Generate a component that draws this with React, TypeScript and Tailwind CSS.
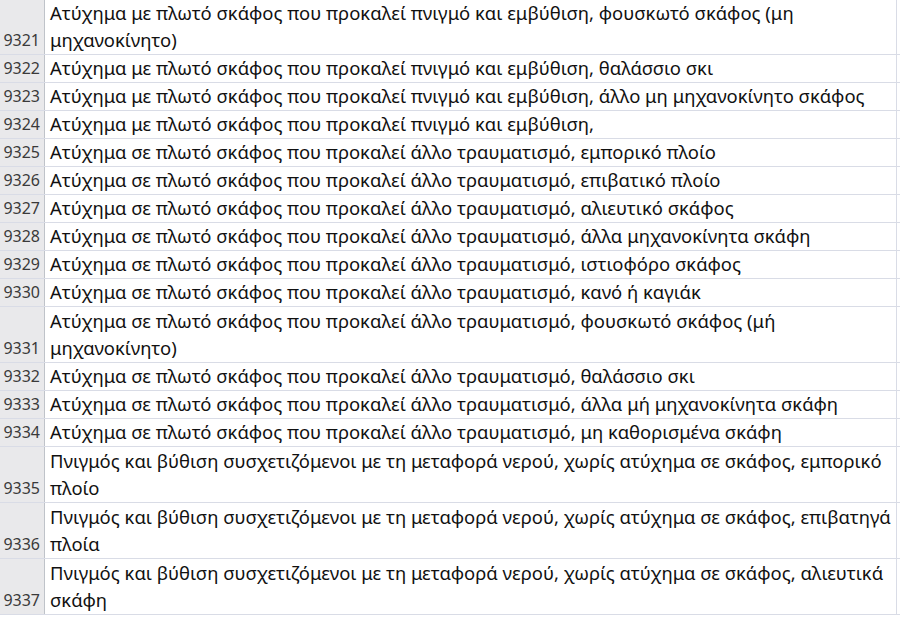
import React from "react";

const rows: { n: number; t: string[]; h: number }[] = [
  { n: 9321, t: ["Ατύχημα με πλωτό σκάφος που προκαλεί πνιγμό και εμβύθιση, φουσκωτό σκάφος (μη", "μηχανοκίνητο)"], h: 55 },
  { n: 9322, t: ["Ατύχημα με πλωτό σκάφος που προκαλεί πνιγμό και εμβύθιση, θαλάσσιο σκι"], h: 28 },
  { n: 9323, t: ["Ατύχημα με πλωτό σκάφος που προκαλεί πνιγμό και εμβύθιση, άλλο μη μηχανοκίνητο σκάφος"], h: 28 },
  { n: 9324, t: ["Ατύχημα με πλωτό σκάφος που προκαλεί πνιγμό και εμβύθιση,"], h: 28 },
  { n: 9325, t: ["Ατύχημα σε πλωτό σκάφος που προκαλεί άλλο τραυματισμό, εμπορικό πλοίο"], h: 28 },
  { n: 9326, t: ["Ατύχημα σε πλωτό σκάφος που προκαλεί άλλο τραυματισμό, επιβατικό πλοίο"], h: 28 },
  { n: 9327, t: ["Ατύχημα σε πλωτό σκάφος που προκαλεί άλλο τραυματισμό, αλιευτικό σκάφος"], h: 28 },
  { n: 9328, t: ["Ατύχημα σε πλωτό σκάφος που προκαλεί άλλο τραυματισμό, άλλα μηχανοκίνητα σκάφη"], h: 28 },
  { n: 9329, t: ["Ατύχημα σε πλωτό σκάφος που προκαλεί άλλο τραυματισμό, ιστιοφόρο σκάφος"], h: 28 },
  { n: 9330, t: ["Ατύχημα σε πλωτό σκάφος που προκαλεί άλλο τραυματισμό, κανό ή καγιάκ"], h: 28 },
  { n: 9331, t: ["Ατύχημα σε πλωτό σκάφος που προκαλεί άλλο τραυματισμό, φουσκωτό σκάφος (μή", "μηχανοκίνητο)"], h: 56 },
  { n: 9332, t: ["Ατύχημα σε πλωτό σκάφος που προκαλεί άλλο τραυματισμό, θαλάσσιο σκι"], h: 28 },
  { n: 9333, t: ["Ατύχημα σε πλωτό σκάφος που προκαλεί άλλο τραυματισμό, άλλα μή μηχανοκίνητα σκάφη"], h: 28 },
  { n: 9334, t: ["Ατύχημα σε πλωτό σκάφος που προκαλεί άλλο τραυματισμό, μη καθορισμένα σκάφη"], h: 28 },
  { n: 9335, t: ["Πνιγμός και βύθιση συσχετιζόμενοι με τη μεταφορά νερού, χωρίς ατύχημα σε σκάφος, εμπορικό", "πλοίο"], h: 56 },
  { n: 9336, t: ["Πνιγμός και βύθιση συσχετιζόμενοι με τη μεταφορά νερού, χωρίς ατύχημα σε σκάφος, επιβατηγά", "πλοία"], h: 56 },
  { n: 9337, t: ["Πνιγμός και βύθιση συσχετιζόμενοι με τη μεταφορά νερού, χωρίς ατύχημα σε σκάφος, αλιευτικά", "σκάφη"], h: 56 },
];

export default function App() {
  return (
    <div className="w-[900px] h-[618px] overflow-hidden bg-white">
      <div className="flex flex-col w-[1000px]">
        {rows.map((r) => (
          <div key={r.n} className="flex border-b border-[#d9dce6]" style={{ height: r.h }}>
            <div
              className="w-[45px] shrink-0 bg-[#e9e9eb] border-r border-[#bfc3c9] flex items-end justify-end pr-[4px] pb-[2px] text-[16px] leading-[24px] text-[#3a3a3a]"
              style={{ fontFamily: '"Noto Sans", sans-serif' }}
            >
              {r.n}
            </div>
            <div
              className="w-[852px] shrink-0 border-r border-[#d9dce6] flex flex-col justify-end pl-[5px] pb-[1px] text-[18.45px] leading-[27px] text-[#111] whitespace-nowrap overflow-hidden"
              style={{ fontFamily: '"Noto Sans", sans-serif' }}
            >
              {r.t.map((l, i) => (
                <div key={i}>{l}</div>
              ))}
            </div>
            <div className="flex-1" />
          </div>
        ))}
      </div>
    </div>
  );
}
